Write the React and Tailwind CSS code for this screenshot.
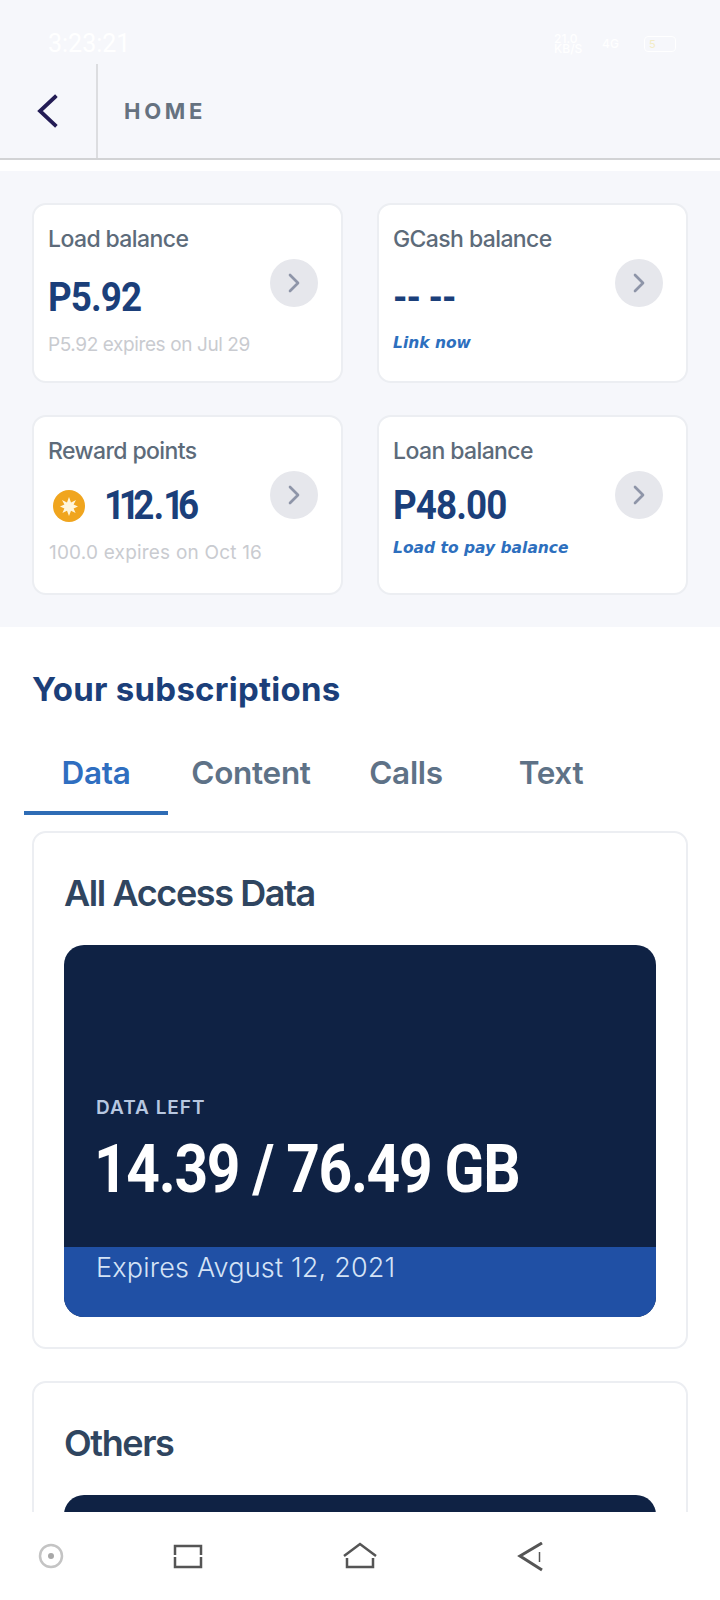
import { ChevronRight } from "lucide-react";

const sans = "font-['Inter','Noto_Sans',sans-serif]";
const num = "font-['Roboto','Liberation_Sans',sans-serif]";

function BalanceCard({ label, children, foot, footClass, valueClass = "mt-[20px]" }) {
  return (
    <div className="flex justify-between h-[180px] rounded-[14px] border-2 border-[#eceef2] bg-white pl-[14px] pr-[23px]">
      <div className="min-w-0">
        <p className="mt-[19px] text-[23px] leading-[30px] font-medium tracking-[-0.6px] text-[#5d6b7a] whitespace-nowrap">{label}</p>
        <div className={valueClass}>{children}</div>
        <p className={footClass}>{foot}</p>
      </div>
      <div className="mt-[54px] flex h-12 w-12 shrink-0 items-center justify-center rounded-full bg-[#e6e7ec]">
        <ChevronRight size={32} strokeWidth={2} className="text-[#8e95a8]" />
      </div>
    </div>
  );
}

const grayFoot = "text-[19px] leading-[26px] text-[#c9cbd0] whitespace-nowrap";
const linkFoot = "font-['DejaVu_Sans',cursive] italic font-bold text-[15.5px] leading-[24px] text-[#2d6fbe] whitespace-nowrap";
const money = `${num} inline-block origin-left scale-x-[0.92] text-[40px] leading-[48px] font-bold tracking-[-1px] text-[#1b3f7a]`;

export default function App() {
  return (
    <div className={`${sans} flex h-[1600px] w-[720px] flex-col overflow-hidden bg-white`}>
      {/* status + header */}
      <div className="bg-[#f6f7fb]">
        <div className="flex h-16 items-end justify-between pb-[6px] pl-[48px] pr-[44px]">
          <span className={`${num} text-[25px] leading-7 text-white`}>3:23:21</span>
          <div className="flex items-center gap-[14px] pb-1 text-white">
            <span className="w-[34px] text-[12px] leading-[10px] font-medium">21.0 KB/S</span>
            <span className="w-[28px] text-[12px] leading-[10px] font-medium">4G</span>
            <span className="flex h-4 w-[32px] items-center rounded-sm border border-white pl-1 text-[11px] text-[#f3ecc6]">5</span>
          </div>
        </div>
        <div className="flex h-[94px] items-stretch">
          <div className="flex w-[96px] items-center pl-[36px]">
            <svg width="24" height="34" viewBox="0 0 24 34" fill="none" stroke="#231c55" strokeWidth="3.8" strokeLinecap="square">
              <path d="M19 3 L4 17 L19 31" />
            </svg>
          </div>
          <div className="w-[2px] bg-[#dcdde0]" />
          <div className="flex items-center pl-[26px]">
            <span className="text-[22px] font-bold tracking-[3.7px] text-[#667280]">HOME</span>
          </div>
        </div>
      </div>
      <div className="h-[2px] bg-[#d2d3d5]" />
      <div className="h-[11px] bg-white" />

      {/* balances */}
      <div className="grid h-[456px] grid-cols-[311px_311px] content-start gap-x-[34px] gap-y-[32px] bg-[#f6f7fb] pl-[32px] pt-[32px]">
        <BalanceCard label="Load balance" foot="P5.92 expires on Jul 29" footClass={`${grayFoot} mt-[10px] tracking-[-0.4px]`}>
          <span className={money}>P5.92</span>
        </BalanceCard>
        <BalanceCard label="GCash balance" foot="Link now" footClass={`${linkFoot} mt-[9px]`}>
          <span className={`${money} scale-x-[0.88]`}>-- --</span>
        </BalanceCard>
        <BalanceCard
          label="Reward points"
          valueClass="mt-[16px] flex items-center"
          foot="100.0 expires on Oct 16"
          footClass={`${grayFoot} mt-[10px] pl-px tracking-[0.2px]`}
        >
          <svg width="34" height="34" viewBox="0 0 34 34" className="ml-[4px] mr-[18px]">
            <circle cx="17" cy="17" r="16" fill="#f0a51e" />
            <path d="M17 8 L19 13.4 L24 11 L21.6 15.6 L26 17.5 L21.6 19.4 L23.6 24 L19 21.8 L17 27 L15 21.8 L10.4 24 L12.4 19.4 L8 17.5 L12.4 15.6 L10 11 L15 13.4 Z" fill="#fff6dc" />
          </svg>
          <span className={money}>
            <span className="tracking-[-7px]">11</span>2.<span className="tracking-[-7px]">1</span>6
          </span>
        </BalanceCard>
        <BalanceCard label="Loan balance" valueClass="mt-[16px]" foot="Load to pay balance" footClass={`${linkFoot} mt-[6px]`}>
          <span className={money}>P48.00</span>
        </BalanceCard>
      </div>

      {/* subscriptions, clipped by the nav bar */}
      <div className="min-h-0 flex-1 overflow-hidden bg-white">
        <h2 className="mt-[41px] pl-[32px] text-[33px] leading-[42px] font-bold tracking-[0.25px] text-[#1b3f7a]">Your subscriptions</h2>
        <div className="mt-[43px] flex pl-[24px] text-[31.5px] leading-[40px] font-semibold tracking-[-0.3px] text-[#5e7287]">
          <div className="w-[144px] border-b-4 border-[#2e6cb5] pb-[18px] text-center text-[#2f6ec0]">Data</div>
          <div className="w-[166px] text-center">Content</div>
          <div className="w-[144px] text-center">Calls</div>
          <div className="w-[146px] text-center">Text</div>
        </div>

        <section className="mx-[32px] mt-[16px] h-[518px] rounded-[14px] border-2 border-[#eceef2] px-[30px] pt-[38px]">
          <h3 className="text-[36px] leading-[44px] font-semibold tracking-[-1.4px] text-[#2f4560]">All Access Data</h3>
          <div className="mt-[30px] overflow-hidden rounded-[20px] bg-[#0f2244]">
            <div className="h-[302px] pl-[32px] pt-[150px]">
              <p className="text-[19px] leading-[26px] font-semibold tracking-[1px] text-[#b7c7e0]">DATA LEFT</p>
              <p className={`${num} mt-[11px] -ml-[2px] origin-left scale-x-[0.89] text-[66px] leading-[76px] font-bold tracking-[-1.5px] text-white whitespace-nowrap`}>14.39 / 76.49 GB</p>
            </div>
            <div className="h-[70px] bg-[#2050a5] pl-[32px] pt-[2px] text-[27px] leading-[38px] font-light tracking-[0.2px] text-[#d5e3f6]">
              Expires Avgust 12, 2021
            </div>
          </div>
        </section>

        <section className="mx-[32px] mt-[32px] h-[200px] rounded-[14px] border-2 border-[#eceef2] px-[30px] pt-[38px]">
          <h3 className="text-[36px] leading-[44px] font-semibold tracking-[-1.4px] text-[#2f4560]">Others</h3>
          <div className="mt-[30px] h-[100px] rounded-[20px] bg-[#0f2244]" />
        </section>
      </div>

      {/* android nav bar */}
      <div className="flex h-[88px] shrink-0 items-start bg-white pt-[30px]">
        <svg width="720" height="30" viewBox="0 0 720 30" fill="none">
          <circle cx="51" cy="14" r="11" stroke="#c4c4c4" strokeWidth="2.5" />
          <circle cx="51" cy="14" r="3" fill="#a8a8a8" />
          <path d="M175 13 V4 H201 V13 M175 15 V25 H201 V15" stroke="#555" strokeWidth="2.5" />
          <path d="M344 14 L360 2 L376 14 M347 16 V25 H373 V16" stroke="#555" strokeWidth="2.5" />
          <path d="M542 1 L520 14 L542 28" stroke="#555" strokeWidth="3" />
          <path d="M539.5 10 V20" stroke="#555" strokeWidth="1.5" />
        </svg>
      </div>
    </div>
  );
}
